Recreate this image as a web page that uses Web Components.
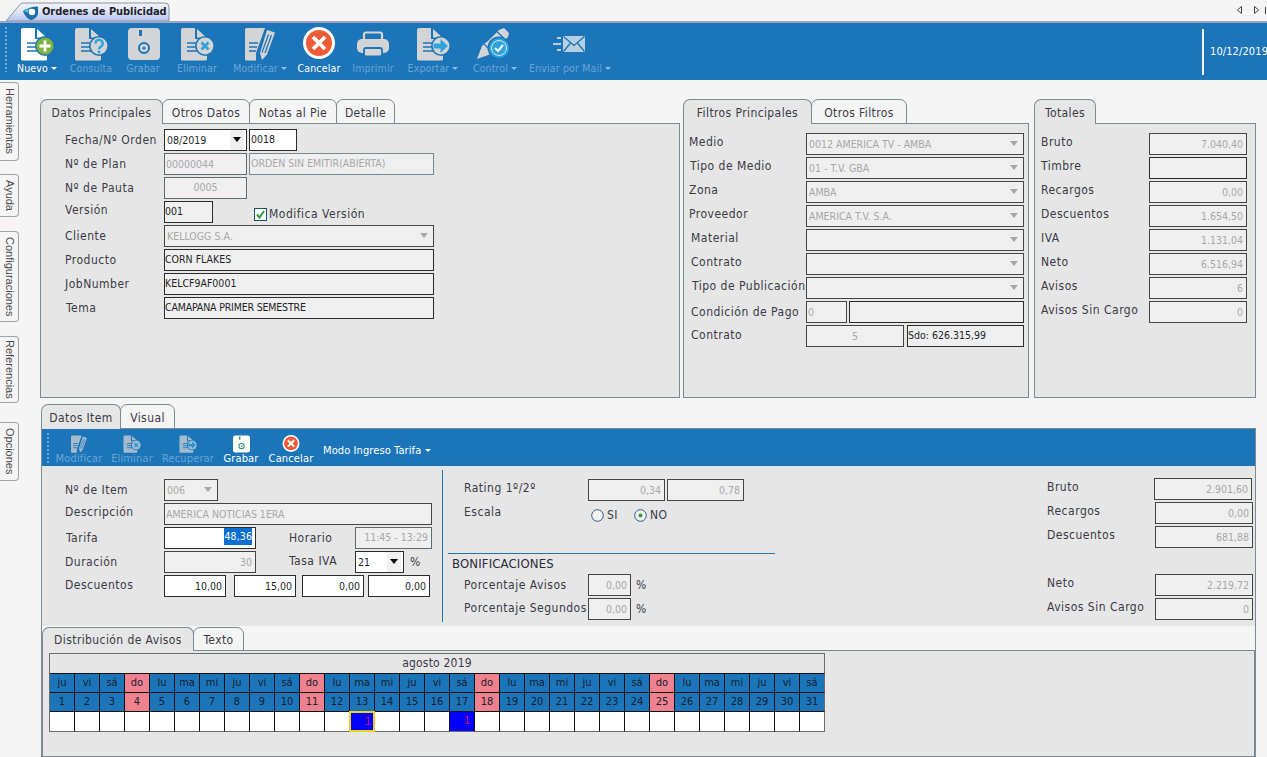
<!DOCTYPE html>
<html lang="es"><head><meta charset="utf-8"><title>Ordenes de Publicidad</title>
<style>
html,body{margin:0;padding:0}
body{width:1267px;height:757px;overflow:hidden;background:#f5f5f5;font:12px "DejaVu Sans Condensed","DejaVu Sans",sans-serif;color:#3a3a46}
</style></head><body>
<doc-tabbar></doc-tabbar>
<main-toolbar>
  <tool-btn w="46" icon="nuevo" label="Nuevo" caret on></tool-btn>
  <tool-btn w="62" icon="consulta" label="Consulta"></tool-btn>
  <tool-btn w="42" icon="save" label="Grabar"></tool-btn>
  <tool-btn w="66" icon="elim" label="Eliminar"></tool-btn>
  <tool-btn w="60" icon="mod" label="Modificar" caret></tool-btn>
  <tool-btn w="58" icon="cancel" label="Cancelar" on></tool-btn>
  <tool-btn w="50" icon="print" label="Imprimir"></tool-btn>
  <tool-btn w="70" icon="export" label="Exportar" caret></tool-btn>
  <tool-btn w="54" icon="control" label="Control" caret></tool-btn>
  <tool-btn w="96" icon="mail" label="Enviar por Mail" caret></tool-btn>
</main-toolbar>
<work-area>
  <side-rail slot="rail">
    <side-tab h="79" top="2">Herramientas</side-tab>
    <side-tab h="43" top="13">Ayuda</side-tab>
    <side-tab h="91" top="14">Configuraciones</side-tab>
    <side-tab h="67" top="14">Referencias</side-tab>
    <side-tab h="59" top="19">Opciones</side-tab>
  </side-rail>
  <panel-row>
    <tab-panel w="640" h="299" tabs="Datos Principales:122,Otros Datos:87,Notas al Pie:87,Detalle:58" pt="5" pl="24">
      <form-row label="Fecha/Nº Orden" lw="99"><ui-field w="83" v="08/2019" st="e" sel pad="2"></ui-field><ui-field w="48" ml="2" v="0018" st="e" lh="18"></ui-field></form-row>
      <form-row label="Nº de Plan" lw="99"><ui-field w="83" v="00000044" st="d" bc="#5d6a70"></ui-field><ui-field w="185" ml="2" v="ORDEN SIN EMITIR(ABIERTA)" st="d" bc="#7b8a92" lh="18"></ui-field></form-row>
      <form-row label="Nº de Pauta" lw="99"><ui-field w="83" v="0005" al="center" st="d" bc="#5d6a70" lh="18"></ui-field></form-row>
      <form-row label="Versión" lw="99" dy="-2"><ui-field w="49" v="001" st="t"></ui-field><check-box ml="41" checked>Modifica Versión</check-box></form-row>
      <form-row label="Cliente" lw="99"><ui-field w="270" v="KELLOGG S.A." st="d" sel pad="2" bc="#444"></ui-field></form-row>
      <form-row label="Producto" lw="99"><ui-field w="270" v="CORN FLAKES" st="t"></ui-field></form-row>
      <form-row label="JobNumber" lw="99"><ui-field w="270" v="KELCF9AF0001" st="t"></ui-field></form-row>
      <form-row label="Tema" lw="99" ix="1"><ui-field w="270" v="CAMAPANA PRIMER SEMESTRE" st="t" tight></ui-field></form-row>
    </tab-panel>
    <tab-panel w="346" h="299" ml="3" tabs="Filtros Principales:128,Otros Filtros:95" pt="9" pl="5">
      <form-row label="Medio" lw="117" dy="-2"><ui-field w="218" v="0012 AMERICA TV - AMBA" st="d" sel pad="2" bc="#444"></ui-field></form-row>
      <form-row label="Tipo de Medio" lw="117" dy="-2" ix="1"><ui-field w="218" v="01 - T.V. GBA" st="d" sel pad="2" bc="#444"></ui-field></form-row>
      <form-row label="Zona" lw="117" dy="-2"><ui-field w="218" v="AMBA" st="d" sel pad="2" bc="#444"></ui-field></form-row>
      <form-row label="Proveedor" lw="117" dy="-2"><ui-field w="218" v="AMERICA T.V. S.A." st="d" sel pad="2" bc="#444"></ui-field></form-row>
      <form-row label="Material" lw="117" dy="-2" ix="2"><ui-field w="218" st="d" sel bc="#444"></ui-field></form-row>
      <form-row label="Contrato" lw="117" dy="-2" ix="2"><ui-field w="218" st="d" sel bc="#444"></ui-field></form-row>
      <form-row label="Tipo de Publicación" lw="117" dy="-2" ix="3"><ui-field w="218" st="d" sel bc="#444"></ui-field></form-row>
      <form-row label="Condición de Pago" lw="117" ix="2"><ui-field w="41" v="0" st="d" bc="#444"></ui-field><ui-field w="175" ml="2" st="t"></ui-field></form-row>
      <form-row label="Contrato" lw="117" dy="-1" ix="2"><ui-field w="98" v="5" al="center" st="d" bc="#444"></ui-field><ui-field w="117" ml="3" v="Sdo: 626.315,99" st="t"></ui-field></form-row>
    </tab-panel>
    <tab-panel w="222" h="299" ml="5" tabs="Totales:61" pt="9" pl="6">
      <form-row label="Bruto" lw="108" dy="-2"><ui-field w="98" v="7.040,40" al="right" st="d" bc="#444"></ui-field></form-row>
      <form-row label="Timbre" lw="108" dy="-2"><ui-field w="98" st="t"></ui-field></form-row>
      <form-row label="Recargos" lw="108" dy="-2"><ui-field w="98" v="0,00" al="right" st="d" bc="#444"></ui-field></form-row>
      <form-row label="Descuentos" lw="108" dy="-2"><ui-field w="98" v="1.654,50" al="right" st="d" bc="#444"></ui-field></form-row>
      <form-row label="IVA" lw="108" dy="-2"><ui-field w="98" v="1.131,04" al="right" st="d" bc="#444"></ui-field></form-row>
      <form-row label="Neto" lw="108" dy="-2"><ui-field w="98" v="6.516,94" al="right" st="d" bc="#444"></ui-field></form-row>
      <form-row label="Avisos" lw="108" dy="-2"><ui-field w="98" v="6" al="right" st="d" bc="#444"></ui-field></form-row>
      <form-row label="Avisos Sin Cargo" lw="108" dy="-2"><ui-field w="98" v="0" al="right" st="d" bc="#444"></ui-field></form-row>
    </tab-panel>
  </panel-row>
  <tab-panel w="1215" h="353" ml="1" mt="6" tabs="Datos Item:79,Visual:54">
    <sub-toolbar>
      <tool-btn small w="54" icon="mod" label="Modificar"></tool-btn>
      <tool-btn small w="52" icon="elim" label="Eliminar"></tool-btn>
      <tool-btn small w="60" icon="export" label="Recuperar"></tool-btn>
      <tool-btn small w="46" icon="save" label="Grabar" on></tool-btn>
      <tool-btn small w="54" icon="cancel" label="Cancelar" on></tool-btn>
      <drop-label>Modo Ingreso Tarifa</drop-label>
    </sub-toolbar>
    <item-form>
      <form-col slot="a">
        <form-row label="Nº de Item" lw="99"><ui-field w="54" v="006" st="d" sel pad="2" bc="#444"></ui-field></form-row>
        <form-row label="Descripción" lw="99" dy="-2"><ui-field w="268" v="AMERICA NOTICIAS 1ERA" st="d" bc="#444"></ui-field></form-row>
        <form-row label="Tarifa" lw="99" ix="1"><ui-field w="92" v="48,36" al="right" st="e" picked></ui-field><form-label w="66" ml="33">Horario</form-label><ui-field w="77" v="11:45 - 13:29" al="right" st="d" bc="#5d6a70" lh="18"></ui-field></form-row>
        <form-row label="Duración" lw="99"><ui-field w="92" v="30" al="right" st="d" bc="#444"></ui-field><form-label w="66" ml="33" dy="-1">Tasa IVA</form-label><ui-field w="49" v="21" st="e" sel pad="2"></ui-field><form-label w="14" ml="6">%</form-label></form-row>
        <form-row label="Descuentos" lw="99" dy="-1"><ui-field w="62" v="10,00" al="right" st="e"></ui-field><ui-field w="62" ml="8" v="15,00" al="right" st="e"></ui-field><ui-field w="62" ml="6" v="0,00" al="right" st="e"></ui-field><ui-field w="62" ml="4" v="0,00" al="right" st="e"></ui-field></form-row>
      </form-col>
      <form-col slot="b">
        <form-row label="Rating 1º/2º" lw="124" dy="-2"><ui-field w="77" v="0,34" al="right" st="d" bc="#444"></ui-field><ui-field w="77" ml="2" v="0,78" al="right" st="d" bc="#444"></ui-field></form-row>
        <form-row label="Escala" lw="124" dy="-2"><radio-opt ml="3">SI</radio-opt><radio-opt ml="16" checked>NO</radio-opt></form-row>
        <section-head>BONIFICACIONES</section-head>
        <form-row label="Porcentaje Avisos" lw="124"><ui-field w="43" v="0,00" al="right" st="d" bc="#444"></ui-field><form-label w="14" ml="5">%</form-label></form-row>
        <form-row label="Porcentaje Segundos" lw="124" dy="-1"><ui-field w="43" v="0,00" al="right" st="d" bc="#444"></ui-field><form-label w="14" ml="5">%</form-label></form-row>
      </form-col>
      <form-col slot="c">
        <form-row label="Bruto" lw="107" dy="-2"><ui-field w="98" v="2.901,60" al="right" st="d" bc="#444"></ui-field></form-row>
        <form-row label="Recargos" lw="108" dy="-2"><ui-field w="98" v="0,00" al="right" st="d" bc="#444"></ui-field></form-row>
        <form-row label="Descuentos" lw="108" dy="-2"><ui-field w="98" v="681,88" al="right" st="d" bc="#444"></ui-field></form-row>
        <form-row></form-row>
        <form-row label="Neto" lw="108" dy="-2"><ui-field w="98" v="2.219,72" al="right" st="d" bc="#444"></ui-field></form-row>
        <form-row label="Avisos Sin Cargo" lw="108" dy="-2"><ui-field w="98" v="0" al="right" st="d" bc="#444"></ui-field></form-row>
      </form-col>
    </item-form>
    <lower-band>
      <tab-panel w="1213" h="131" tabs="Distribución de Avisos:151,Texto:50" sh="24" tl="24" pt="2" pl="6">
        <month-grid></month-grid>
      </tab-panel>
    </lower-band>
  </tab-panel>
</work-area>
<script>
const def=(tag,render)=>customElements.define(tag,class extends HTMLElement{
  connectedCallback(){ if(this.shadowRoot) return; this.attachShadow({mode:'open'}).innerHTML=render(this); }
});
const A=(e,n,d='')=>e.hasAttribute(n)?e.getAttribute(n):d;

/* ---------- icons ---------- */
const BG='#1c75b9', HI='#2ea3dc';
const docShape=(F,L)=>`<path fill="${F}" d="M4 1h12v11h12v20a1.5 1.5 0 0 1-1.5 1.5H4A1.5 1.5 0 0 1 2 32V3a2 2 0 0 1 2-2z"/><path fill="${F}" d="M18 2l9.5 8.5H18z"/><path stroke="${L}" stroke-width="1.6" d="M8 16h12M8 20h12M8 24h12"/>`;
const badge=(F)=>`<circle cx="26" cy="19" r="10" fill="${BG}"/><circle cx="26" cy="19" r="8.4" fill="${F}"/>`;
const icons={
  nuevo:(F)=>docShape(F,BG)+`<circle cx="26" cy="19" r="10" fill="${BG}"/><circle cx="26" cy="19" r="8.6" fill="#7fb23e"/><path stroke="#fff" stroke-width="2.8" d="M26 13.5v11M20.5 19h11"/>`,
  consulta:(F)=>docShape(F,BG)+badge(F)+`<path fill="none" stroke="${HI}" stroke-width="2.4" d="M22.5 16.5a3.6 3.6 0 1 1 5.4 3.1c-1.2.7-1.9 1.2-1.9 2.6"/><circle cx="26" cy="25" r="1.4" fill="${HI}"/>`,
  save:(F,on)=>`<path fill="${F}" d="M7 1h24a4 4 0 0 1 4 4v24a4 4 0 0 1-4 4H7a4 4 0 0 1-4-4V5a4 4 0 0 1 4-4z"/><rect x="14" y="3" width="3" height="6" fill="${on?'#3f9f5a':BG}"/><circle cx="19" cy="21" r="5" fill="none" stroke="${on?'#2f8f7a':BG}" stroke-width="2"/><circle cx="19" cy="21" r="1.6" fill="${on?'#3f9f5a':BG}"/>`,
  elim:(F)=>docShape(F,BG)+badge(F)+`<path stroke="${HI}" stroke-width="2.8" d="M22.5 15.5l7 7m0-7l-7 7"/>`,
  mod:(F)=>`<path fill="${F}" d="M4.500 1H23L14 26v7.500H4.500A1.500 1.500 0 0 1 3 32V2.500A1.500 1.500 0 0 1 4.500 1z"/><path stroke="${BG}" stroke-width="1.6" d="M7 16h9M7 20h8M7 24h7"/><path fill="${F}" d="M25 3l8 2.500-8 22L20 33l-2-7z"/><path stroke="${BG}" stroke-width="1.200" fill="none" d="M26.500 7.500l-6.500 18M29.500 8l-6.500 18"/>`,
  cancel:()=>`<circle cx="18" cy="16" r="16" fill="#fff"/><circle cx="18" cy="16" r="13" fill="#ee5b36"/><path stroke="#fff" stroke-width="3.800" d="M12 10l12 12m0-12L12 22"/>`,
  print:(F)=>`<path fill="none" stroke="${F}" stroke-width="2.200" d="M9 12V7.500a2 2 0 0 1 2-2h14a2 2 0 0 1 2 2V12"/><rect x="2" y="12" width="32" height="14" rx="5" fill="${F}"/><rect x="9" y="21" width="18" height="8.500" rx="2" fill="${F}" stroke="${BG}" stroke-width="1.800"/>`,
  export:(F)=>docShape(F,BG)+badge(F)+`<path fill="${HI}" d="M18.500 16.500h7V12l7.500 7-7.500 7v-4.500h-7z"/>`,
  control:(F)=>`<path fill="${F}" d="M0 32l5-13L22 3l5-2 5 5-1 4-17 17z"/><path stroke="${BG}" stroke-width="1.200" d="M7 17l9 9M20 4.500l8 8M9 15L19 5"/><circle cx="22" cy="21" r="11.500" fill="${BG}"/><circle cx="22" cy="21" r="10" fill="${HI}"/><circle cx="22" cy="21" r="7.500" fill="none" stroke="#d6e6f2" stroke-width="1"/><path fill="none" stroke="#eef5fa" stroke-width="2" d="M18 21l3 3 5-6"/>`,
  mail:()=>`<rect x="11" y="9" width="22" height="16" fill="#b8cfe2"/><path fill="none" stroke="${BG}" stroke-width="1.300" d="M11.500 9.500l10.500 9 10.500-9M11.500 24.500l7-8.500M32.500 24.500l-7-8.500"/><path stroke="#b8cfe2" stroke-width="1.800" d="M5 11h4M1 17h8M5 23h4"/>`
};

/* ---------- chrome ---------- */
def('doc-tabbar',()=>`<style>
:host{display:block;height:23px;box-sizing:border-box;border-bottom:2px solid #9aa6c4;position:relative}
svg.t{position:absolute;left:0;top:0}
.label{position:absolute;left:42px;top:5px;font-weight:700;font-size:11px;letter-spacing:-.05px;line-height:14px;color:#1e2430}
.nav{position:absolute;right:0;top:3px;width:31px;height:14px}
</style>
<svg class="t" width="172" height="21"><defs><linearGradient id="g" x1="0" y1="0" x2="0" y2="1"><stop offset="0" stop-color="#f4f5f9"/><stop offset=".5" stop-color="#dce3f5"/><stop offset="1" stop-color="#b4c4ee"/></linearGradient></defs>
<path d="M6 21L20 4.500Q21 3 23 3H165Q169 3 169 7V21Z" fill="url(#g)" stroke="#8793a5"/>
<path fill="#1d6fa8" d="M23 11c4-2.500 9-4.500 15-4.500V13c0 4-4 6.500-7 7-3.500-1-6.500-4.500-8-9z"/><circle cx="32" cy="12" r="3.200" fill="#fff"/><path fill="#5fc3e8" d="M24 11c3-1.500 5-2.500 7-3-2 1.500-3 3-3 5z"/></svg>
<span class="label">Ordenes de Publicidad</span>
<svg class="nav" viewBox="0 0 31 14"><path fill="none" stroke="#444" d="M5.500 3.500v7l-4-3.500zM18.500 3.500v7l4-3.500z"/><path stroke="#444" d="M29.500 4v7"/></svg>`);

def('main-toolbar',()=>`<style>
:host{display:flex;height:57px;background:#1c75b9;position:relative;padding-left:14px;box-sizing:border-box}
.grip{position:absolute;left:5px;top:4px;bottom:8px;width:2px;background:repeating-linear-gradient(to bottom,#6fa9d6 0 2px,transparent 2px 4px)}
.right{margin-left:auto;width:65px;overflow:hidden;margin-top:6px;height:46px;border-left:2px solid #f2f6fa;box-sizing:border-box;padding:16px 0 0 6px;color:#fff;font-size:11px;letter-spacing:.1px;white-space:nowrap;line-height:14px}
</style><span class="grip"></span><slot></slot><div class="right">10/12/2019</div>`);

def('tool-btn',e=>{
  const s=e.hasAttribute('small'),on=e.hasAttribute('on'),name=A(e,'icon');
  const F=on?'#fff':'#d3d4d6', size=s?20:36;
  return `<style>
  :host{display:flex;flex-direction:column;align-items:center;width:${A(e,'w')}px;flex:none;padding-top:${s?6:4}px;box-sizing:border-box}
  svg{display:block;opacity:${on||!s?1:.75}}
  .l{display:flex;align-items:center;white-space:nowrap;font-size:${s?11:10.5}px;line-height:${s?11:12}px;color:${on?'#fff':'#69a4d3'};height:${s?11:12}px;letter-spacing:.15px;margin-top:${s?0:-1}px}
  i{display:inline-block;margin-left:3px;border:3px solid transparent;border-top:3px solid ${on?'#fff':'#8fbde0'};border-bottom:0}
  </style><svg width="${size}" height="${size-(s?2:0)}" viewBox="0 0 36 ${s?34:36}">${icons[name](F,on)}</svg><span class="l">${A(e,'label')}${e.hasAttribute('caret')?'<i></i>':''}</span>`;
});

def('sub-toolbar',()=>`<style>
:host{display:flex;height:37px;background:#1c75b9;position:relative;padding-left:10px;box-sizing:border-box}
.grip{position:absolute;left:5px;top:4px;bottom:3px;width:2px;background:repeating-linear-gradient(to bottom,#6fa9d6 0 2px,transparent 2px 4px)}
</style><span class="grip"></span><slot></slot>`);

def('drop-label',()=>`<style>
:host{display:block;color:#fff;font-size:11px;letter-spacing:.1px;line-height:14px;margin:15px 0 0 5px;white-space:nowrap}
i{display:inline-block;margin-left:4px;vertical-align:2px;border:3px solid transparent;border-top:3px solid #fff;border-bottom:0}
</style><slot></slot><i></i>`);

def('work-area',()=>`<style>
:host{display:flex;height:677px}
.rail{width:40px;flex:none}
.c{flex:1;padding-top:19px;min-width:0}
</style><div class="rail"><slot name="rail"></slot></div><div class="c"><slot></slot></div>`);

def('side-rail',()=>`<style>:host{display:flex;flex-direction:column;align-items:flex-start}</style><slot></slot>`);
def('side-tab',e=>`<style>
:host{display:block;width:19px;height:${A(e,'h')}px;margin-top:${A(e,'top')}px;box-sizing:border-box;border:1px solid #9aa5ab;border-left:0;border-radius:0 4px 4px 0;background:#f5f5f5;
writing-mode:vertical-rl;font:11px/17px "Liberation Sans",Arial,sans-serif;color:#4a4a4a;text-align:center}
</style><slot></slot>`);

def('panel-row',()=>`<style>:host{display:flex;align-items:flex-start}</style><slot></slot>`);

def('tab-panel',e=>{
  const tabs=A(e,'tabs').split(',').map(t=>t.split(':'));
  const sh=+A(e,'sh','25');
  return `<style>
  :host{display:block;flex:none;width:${A(e,'w')}px;height:${A(e,'h')}px;margin-left:${A(e,'ml','0')}px;margin-top:${A(e,'mt','0')}px}
  .strip{display:flex;height:${sh}px;position:relative;z-index:1;margin-bottom:-1px}
  .tab{box-sizing:border-box;height:${sh}px;border:1px solid #7b8a92;border-radius:7px 7px 0 0;margin-right:-1px;background:#f5f5f5;text-align:center;line-height:${A(e,'tl',String(sh+2))}px;font-size:12px;letter-spacing:.4px;white-space:nowrap;color:#3a3a46}
  .tab.a{background:#e6e6e6;border-bottom:0}
  .body{box-sizing:border-box;height:calc(100% - ${sh-1}px);border:1px solid #7b8a92;background:#e6e6e6;padding:${A(e,'pt','0')}px 0 0 ${A(e,'pl','0')}px;overflow:hidden}
  </style><div class="strip">${tabs.map((t,i)=>`<div class="tab${i?'':' a'}" style="width:${+t[1]+1}px">${t[0]}</div>`).join('')}</div><div class="body"><slot></slot></div>`;
});

/* ---------- form pieces ---------- */
const lab=`font-size:12px;line-height:22px;letter-spacing:.5px;white-space:nowrap;color:#3a3a46`;
def('form-row',e=>`<style>
:host{display:flex;height:22px;margin-bottom:2px;align-items:flex-start}
.l{${lab};flex:none;box-sizing:border-box;width:${A(e,'lw','0')}px;padding-left:${A(e,'ix','0')}px;margin-top:${A(e,'dy','0')}px}
</style><span class="l">${A(e,'label')}</span><slot></slot>`);
def('form-label',e=>`<style>
:host{display:block;flex:none;${lab};width:${A(e,'w')}px;margin-left:${A(e,'ml','0')}px;margin-top:${A(e,'dy','0')}px}
</style><slot></slot>`);
def('form-col',()=>`<style>:host{display:block}</style><slot></slot>`);

def('ui-field',e=>{
  const st=A(e,'st','d'),sel=e.hasAttribute('sel'),picked=e.hasAttribute('picked');
  const bg=st==='e'?'#fff':'#efefef', col=st==='d'?'#a8a8a8':'#1f1f28';
  const al=A(e,'al','left');
  const pl=A(e,'pad',st==='t'?'0':'1'), pr=al==='right'?'3':'1';
  const lh=picked?'17':A(e,'lh',st==='t'?'18':'20');
  const v=A(e,'v');
  const arrow=sel?(st==='e'
    ?`<b style="background:#f0f0f0"><i style="border-top-color:#000"></i></b>`
    :`<b><i></i></b>`):'';
  return `<style>
  :host{display:flex;flex:none;box-sizing:border-box;width:${A(e,'w')}px;height:22px;margin-left:${A(e,'ml','0')}px;border:1px solid ${A(e,'bc','#2c2c2c')};background:${bg};color:${col};font-size:10.500px;line-height:${lh}px;white-space:nowrap;overflow:hidden${e.hasAttribute('tight')?';letter-spacing:-.17px':''}}
  .v{flex:1;min-width:0;text-align:${al};padding:0 ${pr}px 0 ${pl}px}
  mark{background:#0a6fd0;color:#fff;display:inline-block;vertical-align:top;line-height:17px;letter-spacing:.1px}
  b{flex:none;width:14px;display:flex;align-items:center;justify-content:center;margin-right:2px}
  i{display:block;border:4px solid transparent;border-top:5px solid #a8a8a8;border-bottom:0;margin:0 0 2px 0}
  </style><span class="v">${picked?`<mark>${v}</mark>`:v}</span>${arrow}`;
});

def('check-box',e=>`<style>
:host{display:flex;align-items:center;flex:none;margin-left:${A(e,'ml','0')}px;height:22px;margin-top:2px;${lab}}
.b{width:11px;height:11px;border:1px solid #1f4f6f;background:#fff;margin-right:2px;display:block}
</style><svg class="b" viewBox="0 0 11 11"><path fill="none" stroke="#2e9b33" stroke-width="2" d="M2 5.500l2.500 3L9 2"/></svg><slot></slot>`);

def('radio-opt',e=>`<style>
:host{display:flex;align-items:center;flex:none;margin-left:${A(e,'ml','0')}px;height:22px;margin-top:1px;${lab}}
svg{margin-right:3px;display:block}
</style><svg width="13" height="13"><circle cx="6.500" cy="6.500" r="5.800" fill="#f3f3f3" stroke="#2a5a80"/>${e.hasAttribute('checked')?'<circle cx="6.500" cy="6.500" r="2" fill="#2e9b33"/>':''}</svg><slot></slot>`);

def('section-head',()=>`<style>
:host{display:block;margin:28px 0 1px -16px;width:327px;border-top:1px solid #1c75b9;box-sizing:border-box;padding-left:4px;height:20px;font-size:13px;letter-spacing:.15px;line-height:19px;color:#2a2a38;font-weight:500}
</style><slot></slot>`);

def('item-form',()=>`<style>
:host{display:flex;height:160px;background:#e6e6e6;box-sizing:border-box}
.a{width:400px;flex:none;padding:13px 0 0 23px;box-sizing:border-box}
.b{width:400px;flex:none;height:152px;margin-top:4px;border-left:1px solid #1c75b9;box-sizing:border-box;padding:9px 0 0 21px}
.c{margin-left:auto;width:208px;flex:none;padding-top:12px;box-sizing:border-box}
</style><div class="a"><slot name="a"></slot></div><div class="b"><slot name="b"></slot></div><div class="c"><slot name="c"></slot></div>`);

def('lower-band',()=>`<style>:host{display:block;background:#f5f5f5;padding-top:1px;height:131px}</style><slot></slot>`);

def('month-grid',()=>{
  const names=['ju','vi','sá','do','lu','ma','mi'];
  let dn='',nn='',bl='';
  for(let d=1;d<=31;d++){
    const w=names[(d-1)%7], p=w==='do'?' p':'';
    dn+=`<div class="c${p}">${w}</div>`;
    nn+=`<div class="c${p}">${d}</div>`;
    bl+=d===13?`<div class="c w mk y"><span>1</span></div>`:d===17?`<div class="c w mk"><span>1</span></div>`:`<div class="c w"></div>`;
  }
  return `<style>
  :host{display:block;width:776px;box-sizing:border-box;border:1px solid #6c6c6c;border-bottom:0;border-left:1px solid #6c6c6c;border-right:0;color:#14202c}
  .m{height:20px;box-sizing:border-box;border-right:1px solid #6c6c6c;border-bottom:1px solid #111;background:#e6e6e6;text-align:center;font-size:12px;line-height:19px;color:#3a3a46;letter-spacing:.2px}
  .r{display:grid;grid-template-columns:repeat(31,25px)}
  .c{box-sizing:border-box;height:19px;background:#1c75b9;border-right:1px solid #111;border-bottom:1px solid #111;text-align:center;font-size:11px;line-height:18px}
  .c.p{background:#f0828f}
  .c:last-child{border-right-color:#6c6c6c}
  .c.w{height:20px;background:#fff;border-bottom-color:#6c6c6c}
  .mk{background:#0000ff!important;text-align:right;color:#d8105c;padding-right:4px}
  .y{border:2px solid #f3d21f!important;margin:-1px 0 0 -1px;width:26px;height:21px!important;padding-right:2px}
  </style><div class="m">agosto 2019</div><div class="r">${dn}</div><div class="r">${nn}</div><div class="r">${bl}</div>`;
});
</script>
</body></html>
